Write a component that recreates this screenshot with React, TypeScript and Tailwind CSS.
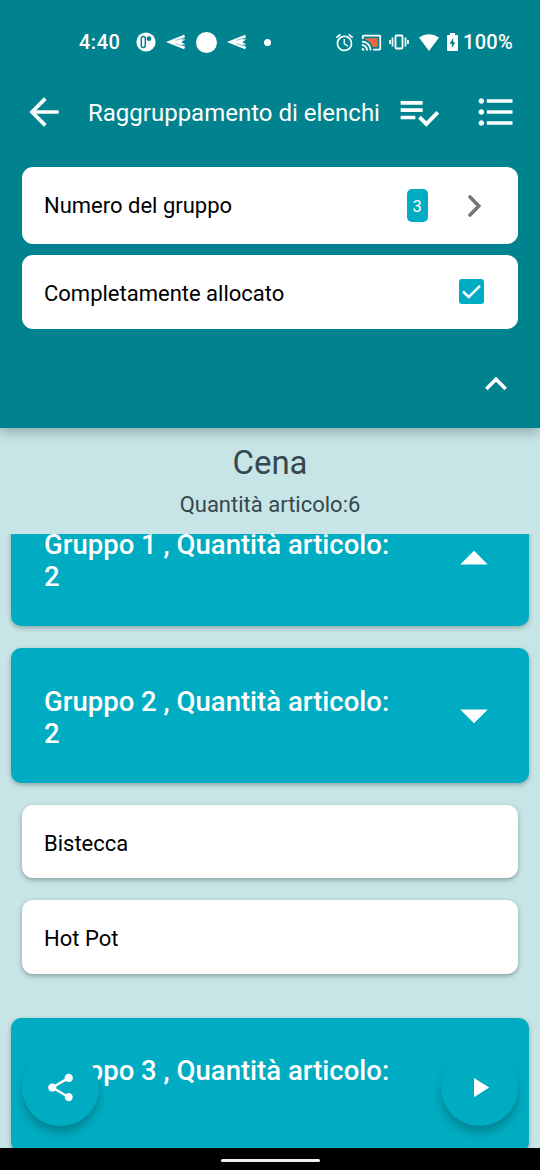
import React from 'react';

const groups = [
  { id: 1, count: 2, open: false, items: [] },
  { id: 2, count: 2, open: true, items: ['Bistecca', 'Hot Pot'] },
  { id: 3, count: 2, open: false, items: [] },
];

function Icon({ d, className }: { d: string; className: string }) {
  return (
    <svg viewBox="0 0 24 24" fill="currentColor" className={className}>
      <path d={d} />
    </svg>
  );
}

function SendIcon({ className }: { className: string }) {
  return (
    <svg viewBox="0 0 22 16" className={className}>
      <path d="M0 8 19 .5 20 3 16 5.400 20.500 5.200 16 8 20.500 10.800 16 10.600 20 13 19 15.500Z" fill="currentColor" />
      <path d="M10 6.300 18 3.800M10 9.700 18 12.200" stroke="#00838f" strokeWidth=".5" fill="none" />
    </svg>
  );
}

function StatusBar() {
  return (
    <div className="flex h-[84px] items-center pl-[79px] text-[20px] font-medium text-white">
      <span className="w-[42px] tracking-[0.5px]">4:40</span>
      <svg viewBox="0 0 20 20" className="ml-[15px] h-5 w-5">
        <circle cx="10" cy="10" r="9.6" fill="#fff" />
        <rect x="5.3" y="4.6" width="4" height="11" rx="2" fill="none" stroke="#00838f" strokeWidth="1.5" />
        <circle cx="13" cy="6.7" r="2.4" fill="#00838f" />
      </svg>
      <SendIcon className="ml-[10px] h-[16px] w-[21px]" />
      <div className="ml-[9px] h-[21px] w-[21px] rounded-full bg-white" />
      <SendIcon className="ml-[10px] h-[16px] w-[21px]" />
      <div className="ml-[16px] h-[7px] w-[7px] rounded-full bg-white" />
      <svg viewBox="0 0 24 24" fill="currentColor" className="ml-[63px] h-[21px] w-[21px]">
        <path d="M22 5.72l-4.6-3.86-1.29 1.53 4.6 3.86L22 5.72zM7.88 3.39L6.6 1.86 2 5.71l1.29 1.53 4.59-3.85zM12.5 8H11v6l4.75 2.85.75-1.23-4-2.37V8zM12 4c-4.97 0-9 4.03-9 9s4.02 9 9 9a9 9 0 0 0 0-18zm0 16c-3.87 0-7-3.13-7-7s3.13-7 7-7 7 3.13 7 7-3.13 7-7 7z" />
      </svg>
      <svg viewBox="0 0 24 24" fill="currentColor" className="ml-[6px] h-[21px] w-[21px]">
        <path d="M5 7h14v10h-5.5C12 12.500 9.500 10 5 8.600z" fill="#f4673f" />
        <path d="M21 3H3c-1.100 0-2 .9-2 2v3h2V5h18v14h-7v2h7c1.100 0 2-.9 2-2V5c0-1.100-.9-2-2-2zM1 18v3h3c0-1.660-1.340-3-3-3zm0-4v2c2.760 0 5 2.240 5 5h2c0-3.870-3.130-7-7-7zm0-4v2c4.970 0 9 4.030 9 9h2c0-6.080-4.930-11-11-11z" />
      </svg>
      <svg viewBox="0 0 20 16" className="ml-[7px] h-[16px] w-[20px]">
        <rect x="6.500" y="1.500" width="7" height="13" rx="1" fill="none" stroke="currentColor" strokeWidth="1.800" />
        <path d="M3.500 3.500v9M16.500 3.500v9M1 6v4M19 6v4" stroke="currentColor" strokeWidth="1.700" />
      </svg>
      <svg viewBox="0 0 20 17" className="ml-[10px] h-[17px] w-[20px]">
        <path d="M0 3.500Q10-3 20 3.500L10 17Z" fill="#fff" />
      </svg>
      <svg viewBox="0 0 11 18" className="ml-[8px] h-[18px] w-[11px]">
        <path d="M3 0h5v2h2.200q.8 0 .8.8v14.400q0 .8-.8.800H.8q-.8 0-.8-.8V2.800Q0 2 .8 2H3z" fill="#fff" />
        <path d="M6.200 5 2.600 10.800h2.200V15l3.600-5.800H6.200z" fill="#00838f" />
      </svg>
      <span className="ml-[5px] tracking-[0.3px] whitespace-nowrap">100%</span>
    </div>
  );
}

function Toolbar() {
  return (
    <div className="flex h-[83px] items-start pt-[6px] pl-[22px] text-white">
      <Icon className="h-11 w-11" d="M20 11H7.830l5.590-5.590L12 4l-8 8 8 8 1.410-1.410L7.830 13H20v-2z" />
      <h1 className="ml-[22px] w-[308.5px] text-[24px] leading-[46px] whitespace-nowrap">Raggruppamento di elenchi</h1>
      <Icon
        className="h-11 w-11"
        d="M14 10H2v2h12v-2zm0-4H2v2h12V6zM2 16h8v-2H2v2zm19.500-4.500L23 13l-6.990 7-4.510-4.500L13 14l3.010 3 5.490-5.500z"
      />
      <Icon
        className="ml-[33.5px] h-11 w-11"
        d="M4 10.500c-.83 0-1.500.67-1.500 1.500s.67 1.500 1.500 1.500 1.500-.67 1.500-1.500-.67-1.500-1.500-1.500zm0-6c-.83 0-1.500.67-1.500 1.500S3.170 7.500 4 7.500 5.500 6.830 5.500 6 4.830 4.500 4 4.500zm0 12c-.83 0-1.500.68-1.500 1.500s.68 1.500 1.500 1.500 1.500-.68 1.500-1.500-.67-1.500-1.500-1.500zM7 19h14v-2H7v2zm0-6h14v-2H7v2zm0-8v2h14V5H7z"
      />
    </div>
  );
}

function GroupHeader({ id, count, open }: { id: number; count: number; open: boolean }) {
  return (
    <div className="mx-[11px] flex h-[134.5px] shrink-0 items-center rounded-[10px] bg-[#00acc1] pl-[33px] text-white shadow-[0_2px_5px_rgba(0,0,0,0.28)]">
      <p className="w-[356px] pt-[5px] text-[27.5px] leading-[32px] font-medium">
        Gruppo {id} , Quantità articolo: {count}
      </p>
      <Icon className="ml-[41px] h-[66px] w-[66px] shrink-0" d={open ? 'M7 10l5 5 5-5z' : 'M7 14l5-5 5 5z'} />
    </div>
  );
}

export default function App() {
  return (
    <div className="relative flex h-[1170px] w-[540px] flex-col overflow-hidden bg-[#c7e5e6] font-['Roboto',sans-serif]">
      <header className="z-10 h-[427.5px] shrink-0 bg-[#00838f] shadow-[0_4px_12px_rgba(0,0,0,0.28)]">
        <StatusBar />
        <Toolbar />
        <div className="mx-[22px] flex flex-col gap-[11px] text-[22px] text-black">
          <div className="flex h-[77px] items-center rounded-[11px] bg-white pl-[22px]">
            <span className="w-[363px]">Numero del gruppo</span>
            <span className="flex h-[33px] w-[20.5px] items-center justify-center rounded-[5px] bg-[#00acc1] pt-[3px] text-[16.500px] text-white">
              3
            </span>
            <svg viewBox="0 0 14 22" className="ml-[40.5px] h-[22px] w-[14px]">
              <path d="M2 2l8.800 9L2 20" fill="none" stroke="#757575" strokeWidth="3.600" strokeLinecap="round" />
            </svg>
          </div>
          <div className="flex h-[73.5px] items-center rounded-[11px] bg-white pl-[22px]">
            <span className="w-[414.5px] pt-[3px]">Completamente allocato</span>
            <svg viewBox="0 0 25 25" className="h-[25px] w-[25px]">
              <rect width="25" height="25" rx="3" fill="#00acc1" />
              <path d="M4 12.500 9.800 18 21 6.800" fill="none" stroke="#fff" strokeWidth="2.500" />
            </svg>
          </div>
        </div>
        <div className="flex justify-end pt-[33px] pr-[22px] text-white">
          <Icon className="h-11 w-11" d="M12 8l-6 6 1.410 1.410L12 10.830l4.590 4.580L18 14z" />
        </div>
      </header>

      <div className="flex h-[106.5px] shrink-0 flex-col items-center pt-[15px] text-[#37474f]">
        <h2 className="text-[33px] leading-[39px]">Cena</h2>
        <p className="mt-[10px] text-[22px] leading-[26px]">Quantità articolo:6</p>
      </div>

      <main className="flex min-h-0 flex-1 flex-col overflow-hidden">
        <div className="-mt-[42.5px] flex flex-col gap-[22px]">
          {groups.map(group => (
            <React.Fragment key={group.id}>
              <GroupHeader id={group.id} count={group.count} open={group.open} />
              {group.items.length > 0 && (
                <div className="mx-[22px] mb-[22px] flex flex-col gap-[22px]">
                  {group.items.map(item => (
                    <div
                      key={item}
                      className="flex h-[73.5px] items-center rounded-[11px] bg-white pt-[4px] pl-[22px] text-[22px] text-black shadow-[0_2px_5px_rgba(0,0,0,0.3)]"
                    >
                      {item}
                    </div>
                  ))}
                </div>
              )}
            </React.Fragment>
          ))}
        </div>
      </main>

      <button className="absolute bottom-[44px] left-[22px] flex h-[77px] w-[77px] items-center justify-center rounded-full bg-[#00acc1] text-white shadow-[0_7px_9px_rgba(0,0,0,0.22)]">
        <Icon
          className="h-[33px] w-[33px]"
          d="M18 16.080c-.76 0-1.440.3-1.960.77L8.910 12.700c.05-.23.09-.46.09-.7s-.04-.47-.09-.7l7.050-4.110c.54.5 1.250.81 2.040.81 1.660 0 3-1.340 3-3s-1.340-3-3-3-3 1.340-3 3c0 .24.04.47.09.7L8.040 9.810C7.500 9.310 6.790 9 6 9c-1.660 0-3 1.340-3 3s1.340 3 3 3c.79 0 1.500-.31 2.040-.81l7.120 4.160c-.05.21-.08.43-.08.65 0 1.610 1.310 2.920 2.920 2.920s2.920-1.310 2.920-2.920-1.310-2.920-2.920-2.920z"
        />
      </button>
      <button className="absolute right-[22px] bottom-[44px] flex h-[77px] w-[77px] items-center justify-center rounded-full bg-[#00acc1] text-white shadow-[0_7px_9px_rgba(0,0,0,0.22)]">
        <Icon className="h-[33px] w-[33px]" d="M8 5v14l11-7z" />
      </button>

      <nav className="z-10 flex h-[22px] shrink-0 items-center justify-center bg-black pt-[2px]">
        <div className="h-[3px] w-[99px] rounded-full bg-[#f0f0f0]" />
      </nav>
    </div>
  );
}
